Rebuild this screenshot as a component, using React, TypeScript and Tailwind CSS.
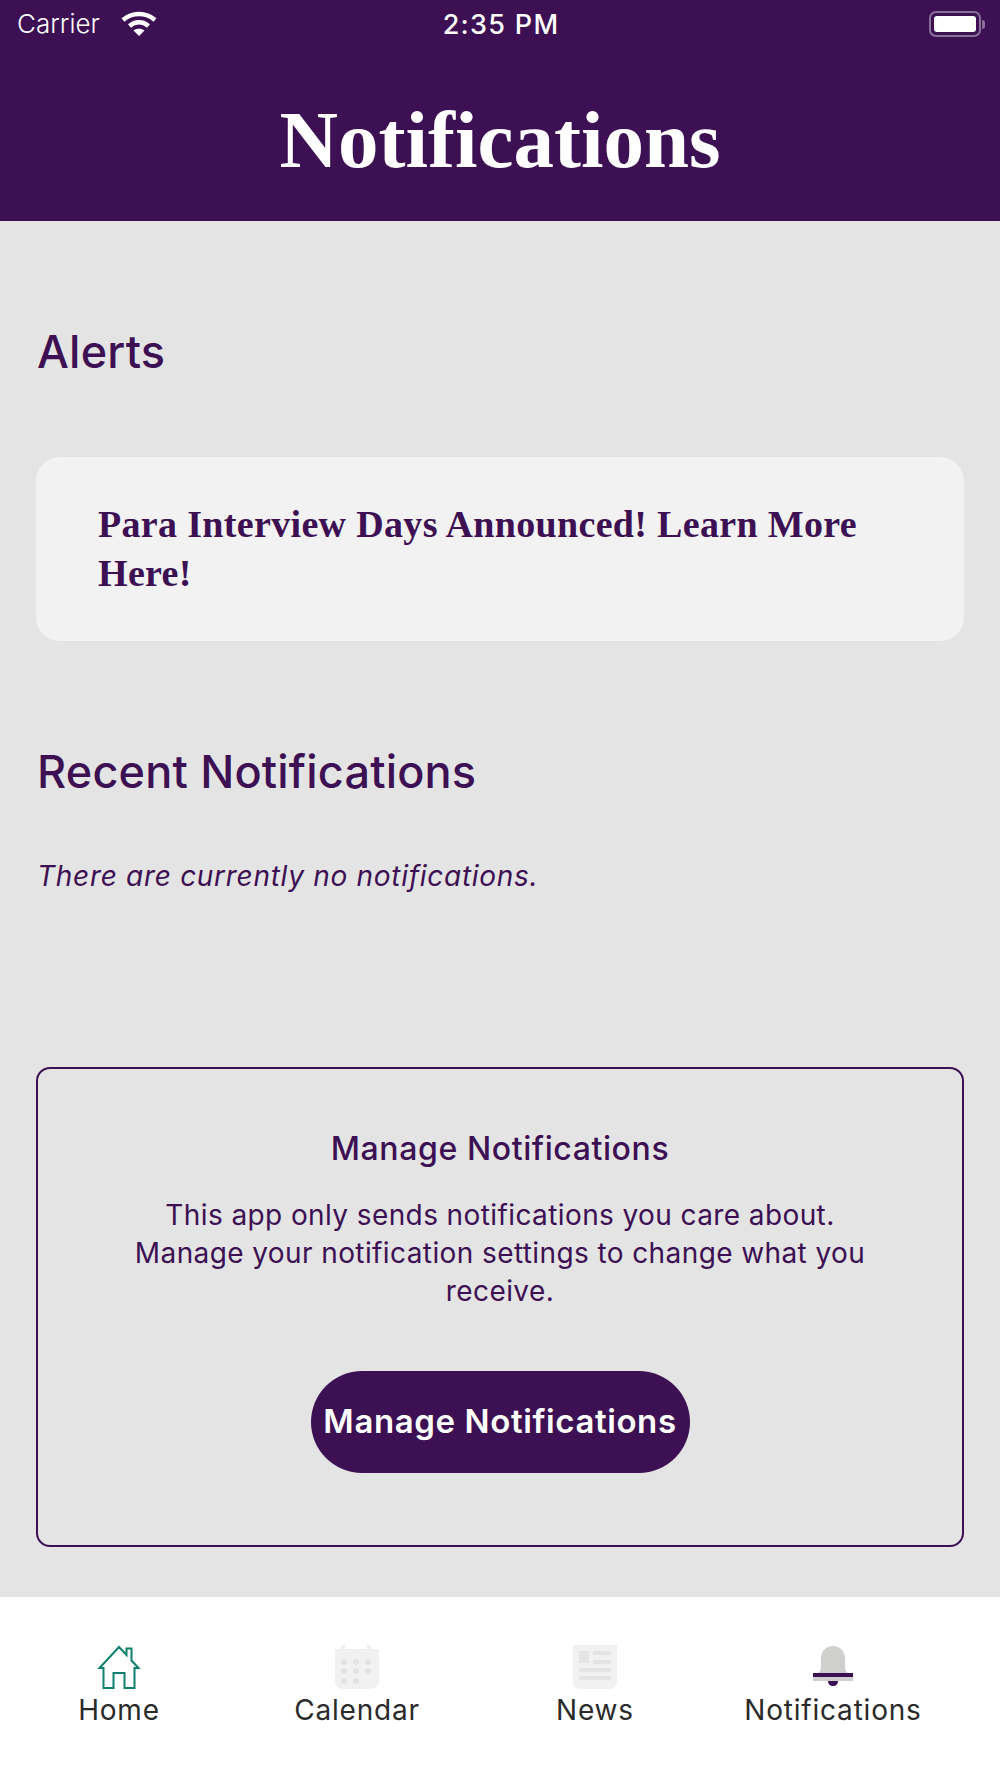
import React from 'react';

const serif = "font-['Liberation_Serif',serif]";

const HomeIcon = () => (
  <svg width="44" height="44" viewBox="0 0 44 44" fill="none" stroke="#0f7f6e" strokeWidth="2">
    <path d="M2.5 23 L22 2 L29.5 10 V3.5 H34.5 V15.5 L41.5 23 H37.5 V43 H27.5 V28 H16.5 V43 H6.5 V23 Z" />
  </svg>
);

const CalendarIcon = () => (
  <svg width="44" height="44" viewBox="0 0 44 44" fill="#f1f1f1">
    <path d="M6 0h4v4h22V0h4v4h8v32a8 8 0 0 1-8 8H8a8 8 0 0 1-8-8V4h6z" />
    <g fill="#e3e3e3">
      <circle cx="9" cy="17" r="3" />
      <circle cx="21" cy="17" r="3" />
      <circle cx="33" cy="17" r="3" />
      <circle cx="9" cy="26" r="3" />
      <circle cx="21" cy="26" r="3" />
      <circle cx="33" cy="26" r="3" />
      <circle cx="9" cy="36" r="3" />
      <circle cx="21" cy="36" r="3" />
    </g>
  </svg>
);

const NewsIcon = () => (
  <svg width="44" height="44" viewBox="0 0 44 44" fill="#f1f1f1">
    <path d="M0 0h44v37a7 7 0 0 1-7 7H7a7 7 0 0 1-7-7z" />
    <g fill="#e4e4e4">
      <rect x="6" y="6" width="10" height="12" />
      <rect x="20" y="6" width="18" height="4" />
      <rect x="20" y="15" width="18" height="4" />
      <rect x="6" y="23" width="32" height="4" />
      <rect x="6" y="31" width="32" height="4" />
    </g>
  </svg>
);

const BellIcon = () => (
  <svg width="40" height="42" viewBox="0 0 40 42">
    <path d="M8 22V13C8 5 13 0 20 0s12 5 12 13v9c0 3 3 6 8 7v6H0v-6c5-1 8-4 8-7z" fill="#cfcfcd" />
    <rect x="0" y="27" width="40" height="4" fill="#3c1053" />
    <path d="M15 35h10c0 3-2 5-5 5s-5-2-5-5z" fill="#3c1053" />
  </svg>
);

const tabs = [
  { label: 'Home', icon: HomeIcon },
  { label: 'Calendar', icon: CalendarIcon },
  { label: 'News', icon: NewsIcon },
  { label: 'Notifications', icon: BellIcon },
];

export default function App() {
  return (
    <div className="w-[1000px] h-[1778px] flex flex-col bg-[#e4e4e4] font-['Inter',sans-serif] overflow-hidden">
      {/* Header */}
      <header className="h-[221px] shrink-0 bg-[#3c1053] text-white flex flex-col">
        <div className="h-[48px] flex items-center justify-between pl-[17px] pr-[15px]">
          <div className="flex items-center gap-[21px] w-[200px]">
            <span className="text-[26px] font-light leading-none">Carrier</span>
            <svg width="36" height="26" viewBox="0 0 36 26" fill="none" stroke="#fff" strokeWidth="4.5">
              <path d="M2 9 C11 1 25 1 34 9" />
              <path d="M8.5 15 C14 10 22 10 27.5 15" />
              <path d="M18 25 L12.5 19.5 C15.5 17 20.5 17 23.5 19.5 Z" fill="#fff" stroke="none" />
            </svg>
          </div>
          <span className="text-[27px] font-medium leading-none tracking-[1.3px]">2:35 PM</span>
          <div className="w-[200px] flex justify-end items-center">
            <div className="w-[52px] h-[26px] rounded-[7px] border-2 border-[#8a6f98] p-[3px]">
              <div className="w-full h-full bg-white rounded-[3px]" />
            </div>
            <div className="w-[3px] h-[9px] bg-[#8a6f98] rounded-r ml-[1px]" />
          </div>
        </div>
        <h1 className={`${serif} font-bold text-[81px] leading-none text-center mt-[52px]`}>Notifications</h1>
      </header>

      {/* Content */}
      <main className="flex-1 px-[36px] text-[#3c1053]">
        <h2 className="text-[45px] font-medium leading-[54px] tracking-[0.2px] mt-[104px] ml-[1px]">Alerts</h2>
        <div className="mt-[78px] h-[184px] rounded-[24px] bg-[#f2f2f2] pl-[62px] pr-[90px] pt-[43px]">
          <p className={`${serif} font-bold text-[38px] leading-[49px] tracking-[0.33px]`}>
            Para Interview Days Announced! Learn More Here!
          </p>
        </div>
        <h2 className="text-[45px] font-medium leading-[54px] tracking-[0.2px] mt-[104px] ml-[1px]">Recent Notifications</h2>
        <p className="text-[28px] italic leading-[36px] tracking-[0.7px] mt-[59px] ml-[1px]">There are currently no notifications.</p>

        <section className="mt-[173px] h-[480px] rounded-[14px] border-2 border-[#3c1053] flex flex-col items-center pt-[60px]">
          <h3 className="text-[32px] font-medium leading-[40px] tracking-[0.6px]">Manage Notifications</h3>
          <p className="text-[28px] leading-[38px] tracking-[0.4px] text-center w-[760px] mt-[27px]">
            This app only sends notifications you care about. Manage your notification settings to change what you receive.
          </p>
          <button className="mt-[61px] h-[102px] w-[379px] rounded-full bg-[#3c1053] text-white text-[33px] font-semibold tracking-[0.6px]">
            Manage Notifications
          </button>
        </section>
      </main>

      {/* Tab bar */}
      <nav className="h-[181px] shrink-0 bg-white grid grid-cols-[238px_238px_238px_238px]">
        {tabs.map((t) => (
          <div key={t.label} className="flex flex-col items-center pt-[48px]">
            <div className="h-[44px] flex items-center justify-center">
              <t.icon />
            </div>
            <span className="text-[28px] leading-[34px] tracking-[0.8px] text-[#2a2a2a] mt-[4px]">{t.label}</span>
          </div>
        ))}
      </nav>
    </div>
  );
}
